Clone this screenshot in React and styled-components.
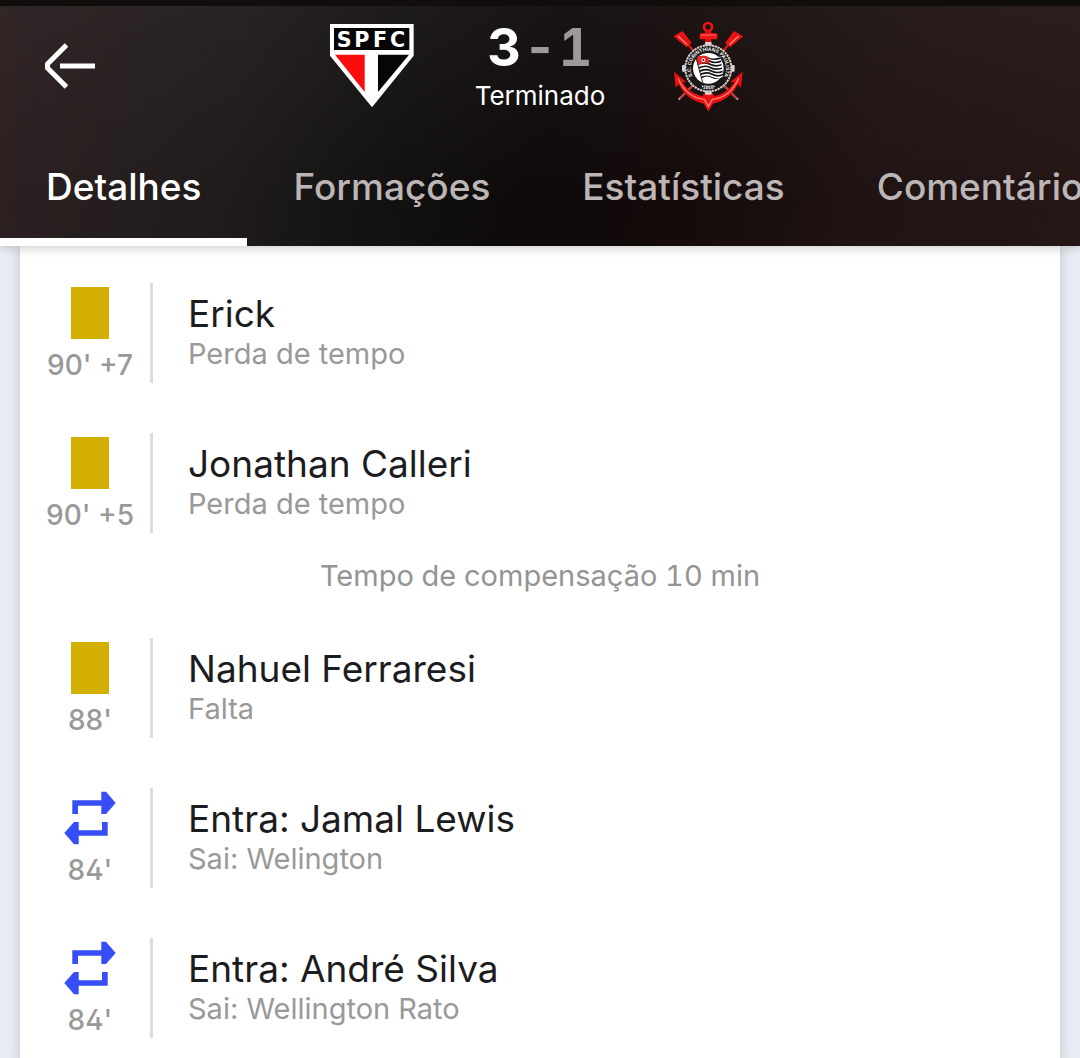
import React, { useState } from 'react'
import styled, { createGlobalStyle } from 'styled-components'

const tabs = ['Detalhes', 'Formações', 'Estatísticas', 'Comentário']

const events = [
  { id: 1, type: 'card', time: "90' +7", title: 'Erick', text: 'Perda de tempo' },
  {
    id: 2,
    type: 'card',
    time: "90' +5",
    title: 'Jonathan Calleri',
    text: 'Perda de tempo',
  },
  { id: 3, type: 'note', text: 'Tempo de compensação 10 min' },
  { id: 4, type: 'card', time: "88'", title: 'Nahuel Ferraresi', text: 'Falta' },
  {
    id: 5,
    type: 'sub',
    time: "84'",
    title: 'Entra: Jamal Lewis',
    text: 'Sai: Welington',
  },
  {
    id: 6,
    type: 'sub',
    time: "84'",
    title: 'Entra: André Silva',
    text: 'Sai: Wellington Rato',
  },
]

const BackIcon = () => (
  <svg width="60" height="60" viewBox="0 0 60 60" fill="none">
    <path d="M26.500 9L7.500 28V32L26.500 51" stroke="#fff" strokeWidth="5" />
    <path d="M20 30H55" stroke="#fff" strokeWidth="5" />
  </svg>
)

const CardIcon = () => (
  <svg width="60" height="60" viewBox="0 0 60 60">
    <rect x="11" y="4" width="38" height="52" fill="#d3ae03" />
  </svg>
)

const SubIcon = () => (
  <svg width="60" height="60" viewBox="0 0 60 60" fill="#374df5">
    <path d="M12.300 26V12.200H41.300V3.700H46L55.700 15L46 26H41.300V17.800H18V26Z" />
    <path d="M47.700 34V47.800H18.700V56.300H14L4.300 45L14 34H18.700V42.200H42V34Z" />
  </svg>
)

const SaoPauloBadge = () => (
  <svg width="84" height="84" viewBox="30 27 252 252" role="img" aria-label="São Paulo">
    <path d="M30 27H281V122L156 277L30 122Z" fill="#fff" />
    <rect x="42" y="39" width="226" height="66" fill="#060606" />
    <path d="M45 119H134V231Z" fill="#fb0d0d" />
    <path d="M174 119H267L174 231Z" fill="#060606" />
    <text
      x="50 103 159 210"
      y="96"
      fill="#fff"
      fontFamily="'DejaVu Sans', sans-serif"
      fontWeight="700"
      fontSize="62"
    >
      SPFC
    </text>
  </svg>
)

const CorinthiansBadge = () => (
  <svg
    width="84"
    height="90"
    viewBox="48 30 252 270"
    role="img"
    aria-label="Corinthians"
  >
    <defs>
      <path id="ring-top" d="M141 213A53 53 0 1 1 209 213" />
      <path id="ring-bottom" d="M138 222A62 62 0 0 0 212 222" />
      <clipPath id="flag">
        <path d="M138 142Q158 128 174 138T211 136L220 196Q202 210 184 200T156 206Z" />
      </clipPath>
    </defs>
    {/* oars */}
    <g stroke="#b9a5a5" strokeWidth="6">
      <path d="M112 98L136 126M238 98L214 126" stroke="#e31b1b" />
      <path d="M130 222L86 266M220 222L264 266" />
      <path d="M130 222L90 262M220 222L260 262" stroke="#e31b1b" strokeWidth="4" />
    </g>
    <path d="M70 76L98 60L125 96L110 109Z" fill="#ea1212" />
    <path d="M84 75L112 101" stroke="#ff8a80" strokeWidth="4" />
    <path d="M280 76L252 60L225 96L240 109Z" fill="#ea1212" />
    <path d="M266 75L238 101" stroke="#ff8a80" strokeWidth="4" />
    {/* anchor */}
    <circle cx="174" cy="48" r="12" fill="none" stroke="#ee1515" strokeWidth="8" />
    <rect x="165" y="58" width="19" height="44" fill="#d80f0f" />
    <rect x="149" y="67" width="53" height="18" rx="4" fill="#f01616" />
    <path d="M154 72H197" stroke="#ff7970" strokeWidth="3" />
    <path
      d="M72 182L110 214L97 213Q116 246 157 256Q164 240 175 240Q187 240 193 256Q234 246 253 213L240 214L278 182L273 230L264 220Q240 267 189 278L175 301L161 278Q110 267 86 220L77 230Z"
      fill="#ea1010"
    />
    <path
      d="M84 202Q109 260 163 265L175 286L187 265Q241 260 266 202"
      fill="none"
      stroke="#ff8178"
      strokeWidth="4"
    />
    {/* ring */}
    <g fill="#d9d4d1">
      <rect x="165" y="93" width="20" height="158" rx="3" />
      <rect x="96" y="162" width="158" height="20" rx="3" />
    </g>
    <circle cx="175" cy="172" r="69" fill="#1a1716" />
    <circle
      cx="175"
      cy="172"
      r="69"
      fill="none"
      stroke="#d5d1ce"
      strokeWidth="6"
      strokeDasharray="7 2"
    />
    <circle cx="175" cy="172" r="46" fill="#fff" />
    <g
      fill="#fff"
      fontFamily="'Liberation Sans', sans-serif"
      fontWeight="700"
      fontSize="15"
    >
      <text>
        <textPath href="#ring-top" startOffset="50%" textAnchor="middle">
          S.C. CORINTHIANS PAULISTA
        </textPath>
      </text>
      <text>
        <textPath href="#ring-bottom" startOffset="50%" textAnchor="middle">
          •1910•
        </textPath>
      </text>
    </g>
    {/* flag */}
    <g clipPath="url(#flag)">
      <rect x="135" y="125" width="90" height="85" fill="#fff" />
      <g fill="none" stroke="#151313" strokeWidth="5">
        <path d="M136 144Q158 130 176 140T220 138" />
        <path d="M136 154Q158 140 178 150T220 148" />
        <path d="M136 164Q160 150 180 160T222 158" />
        <path d="M140 174Q162 160 182 170T224 168" />
        <path d="M142 184Q164 170 184 180T224 178" />
        <path d="M144 194Q166 180 186 190T224 188" />
        <path d="M146 204Q166 190 186 200T224 198" />
      </g>
      <path d="M138 138Q158 128 175 138L179 158Q162 152 145 163Z" fill="#ee2424" />
      <circle cx="160" cy="147" r="6" fill="#fff" />
      <circle cx="160" cy="147" r="3" fill="#222" />
    </g>
    <path d="M138 140L158 214" stroke="#2a2423" strokeWidth="3" />
  </svg>
)

const App = () => {
  const [active, setActive] = useState(tabs[0])

  return (
    <>
      <GlobalStyle />
      <Header>
        <TopBar>
          <BackButton type="button" aria-label="Voltar">
            <BackIcon />
          </BackButton>
          <Match>
            <SaoPauloBadge />
            <Result>
              <Score>
                <span>3</span>
                <Away>-</Away>
                <Away>1</Away>
              </Score>
              <Status>Terminado</Status>
            </Result>
            <CorinthiansBadge />
          </Match>
        </TopBar>
        <Tabs>
          {tabs.map((tab) => (
            <Tab
              key={tab}
              type="button"
              $active={tab === active}
              onClick={() => setActive(tab)}
            >
              {tab}
            </Tab>
          ))}
        </Tabs>
      </Header>
      <Events>
        {events.map((item) =>
          item.type === 'note' ? (
            <Note key={item.id}>{item.text}</Note>
          ) : (
            <EventRow key={item.id}>
              <Moment>
                {item.type === 'card' ? <CardIcon /> : <SubIcon />}
                <Time>{item.time}</Time>
              </Moment>
              <EventInfo>
                <EventTitle>{item.title}</EventTitle>
                <EventText>{item.text}</EventText>
              </EventInfo>
            </EventRow>
          )
        )}
      </Events>
    </>
  )
}

const GlobalStyle = createGlobalStyle`
  * {
    box-sizing: border-box;
  }

  body {
    margin: 0;
    background: #e9eef5;
    color: #1c1c1e;
    font-family: Inter, 'Liberation Sans', sans-serif;
    overflow-x: hidden;
  }

  svg {
    display: block;
    flex-shrink: 0;
  }
`

const Header = styled.header`
  position: relative;
  border-top: 6px solid #120d0d;
  background: linear-gradient(
      180deg,
      rgba(70, 62, 62, 0.2) 0%,
      rgba(70, 62, 62, 0) 80%
    ),
    linear-gradient(
      98deg,
      #2d2021 0%,
      #1f1c1b 22%,
      #131211 36%,
      #0d0a09 50%,
      #140a0a 62%,
      #1f1313 80%,
      #261616 100%
    );
  box-shadow: 0 2px 10px rgba(0, 0, 0, 0.2);
`

const TopBar = styled.div`
  display: grid;
  grid-template-columns: 1fr auto 1fr;
  align-items: center;
  height: 120px;
  padding: 0 40px;
`

const BackButton = styled.button`
  justify-self: start;
  padding: 0;
  border: 0;
  background: none;
  cursor: pointer;
`

const Match = styled.div`
  display: flex;
  align-items: center;
  gap: 60px;
`

const Result = styled.div`
  display: flex;
  flex-direction: column;
  align-items: center;
  width: 132px;
  padding-top: 8px;
`

const Score = styled.div`
  display: flex;
  gap: 2px;
  color: #fff;
  font-size: 52px;
  font-weight: 700;
  line-height: 52px;
  font-feature-settings: 'tnum';
`

const Away = styled.span`
  color: #9c9999;
`

const Status = styled.div`
  color: #fff;
  font-size: 26px;
  line-height: 44px;
`

const Tabs = styled.nav`
  display: flex;
  height: 120px;
  overflow: hidden;
`

const Tab = styled.button`
  flex-shrink: 0;
  padding: 0 46px;
  border: 0;
  background: none;
  box-shadow: ${(props) => (props.$active ? 'inset 0 -8px #fff' : 'none')};
  color: ${(props) => (props.$active ? '#fff' : '#bcb6b6')};
  font-family: inherit;
  font-size: 37px;
  font-weight: 500;
  cursor: pointer;
`

const Events = styled.main`
  margin: 0 20px;
  padding-top: 12px;
  background: #fff;
  box-shadow: 0 0 12px rgba(60, 70, 90, 0.25);
`

const EventRow = styled.article`
  display: flex;
  padding: 25px 10px;
`

const Moment = styled.div`
  display: flex;
  flex-direction: column;
  align-items: center;
  flex-shrink: 0;
  width: 123px;
  height: 100px;
  border-right: 3px solid #dcdcdc;
`

const Time = styled.span`
  color: #999;
  font-size: 28px;
  font-weight: 500;
  line-height: 44px;
  font-feature-settings: 'cv02';
`

const EventInfo = styled.div`
  display: flex;
  flex-direction: column;
  justify-content: center;
  padding: 2px 0 0 35px;
`

const EventTitle = styled.h2`
  margin: 0;
  font-size: 37px;
  font-weight: 400;
  line-height: 40px;
`

const EventText = styled.p`
  margin: 0;
  color: #999;
  font-size: 29px;
  line-height: 40px;
`

const Note = styled.p`
  margin: 0 0 19px;
  color: #949494;
  font-size: 29px;
  line-height: 36px;
  text-align: center;
  font-feature-settings: 'tnum';
`

export default App
